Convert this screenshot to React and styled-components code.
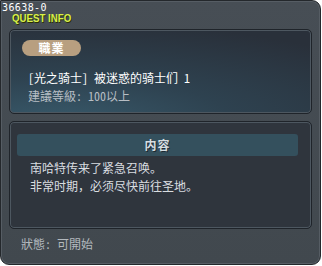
import React from 'react'
import styled, { createGlobalStyle } from 'styled-components'

const GlobalStyle = createGlobalStyle`
  html, body {
    margin: 0;
    padding: 0;
    background: #ffffff;
  }
  body {
    font-family: "Noto Sans Mono CJK SC", "Noto Sans CJK SC", "Noto Sans CJK TC", "DejaVu Sans", sans-serif;
  }
`

const Window = styled.div`
  box-sizing: border-box;
  width: 321px;
  height: 265px;
  background: linear-gradient(180deg, #474e55 0%, #41484e 100%);
  border: 1px solid #24282c;
  border-radius: 0 9px 9px 9px;
  box-shadow: inset 0 0 0 1px #565d64;
  padding: 2px 8px 0 8px;
  display: flex;
  flex-direction: column;
`

const QuestId = styled.div`
  font-family: "DejaVu Sans Mono", "Liberation Mono", monospace;
  font-size: 10px;
  line-height: 10px;
  color: #ffffff;
  margin-left: -7px;
  letter-spacing: 0.4px;
`

const Title = styled.div`
  align-self: flex-start;
  font-family: "Liberation Sans", Arial, sans-serif;
  font-weight: bold;
  font-size: 11px;
  line-height: 11px;
  color: #d8f04a;
  margin-left: 3px;
  transform: scaleX(0.88);
  transform-origin: left center;
  text-shadow: 1px 1px 0 #2a3000;
`

const Card = styled.div`
  box-sizing: border-box;
  border: 1px solid #1f242a;
  box-shadow: inset 0 0 0 1px #4d5760;
  border-radius: 5px;
  background: ${p => p.$glow
    ? 'radial-gradient(ellipse 130% 120% at 15% 110%, #38596a 0%, #2e4250 45%, #29303a 100%)'
    : '#2f353d'};
  margin-top: ${p => p.$top}px;
  height: ${p => p.$height}px;
`

const InfoCard = styled(Card)`
  padding: 10px 12px 0 12px;
`

const Pill = styled.div`
  width: 59px;
  height: 16px;
  border-radius: 8px;
  background: #b89f80;
  color: #ffffff;
  font-weight: bold;
  font-size: 12px;
  line-height: 16px;
  text-align: center;
  letter-spacing: 1px;
`

const QuestName = styled.div`
  margin-top: 13px;
  margin-left: 6px;
  font-size: 12px;
  line-height: 18px;
  color: #ffffff;
`

const Level = styled.div`
  margin-left: 6px;
  font-size: 12px;
  line-height: 18px;
  color: #b7bec4;
`

const ContentCard = styled(Card)`
  padding: 12px 13px 0 7px;
`

const SectionBar = styled.div`
  height: 22px;
  border-radius: 3px;
  background: #34505d;
  color: #d6dde2;
  font-weight: bold;
  font-size: 12px;
  line-height: 22px;
  text-align: center;
  letter-spacing: 1px;
  text-shadow: 1px 1px 0 #1c2a31;
`

const Body = styled.div`
  margin-top: 3px;
  padding-left: 13px;
  font-size: 12px;
  line-height: 18px;
  color: #d9dde0;
`

const Status = styled.div`
  margin-top: 6px;
  margin-left: 12px;
  font-size: 12px;
  line-height: 18px;
  color: #b3b9be;
`

export default function App() {
  return (
    <>
      <GlobalStyle />
      <Window>
        <QuestId>36638-0</QuestId>
        <Title>QUEST INFO</Title>
        <InfoCard $glow $top={5} $height={85}>
          <Pill>職業</Pill>
          <QuestName>[光之骑士] 被迷惑的骑士们 1</QuestName>
          <Level>建議等級: 100以上</Level>
        </InfoCard>
        <ContentCard $top={7} $height={108}>
          <SectionBar>内容</SectionBar>
          <Body>
            南哈特传来了紧急召唤。<br />
            非常时期，必须尽快前往圣地。
          </Body>
        </ContentCard>
        <Status>狀態: 可開始</Status>
      </Window>
    </>
  )
}
